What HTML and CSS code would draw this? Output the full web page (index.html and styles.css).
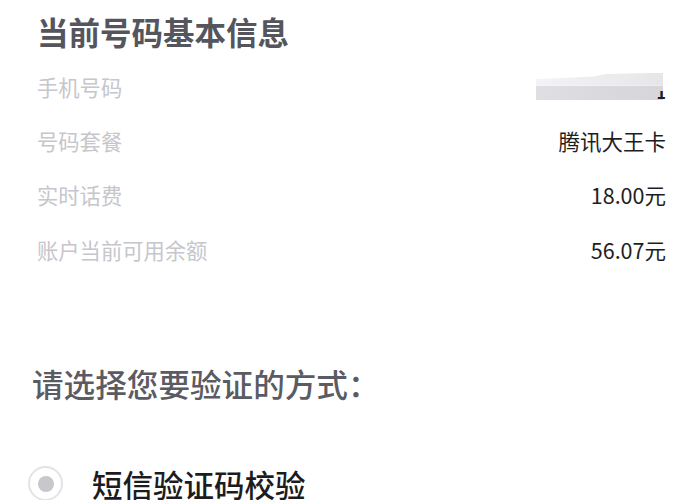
FILE: index.html
```html
<!DOCTYPE html>
<html lang="zh-CN">
<head>
<meta charset="utf-8">
<title>当前号码基本信息</title>
<link rel="stylesheet" href="styles.css">
</head>
<body>
<div class="page">
  <h1 class="title">当前号码基本信息</h1>
  <div class="rows">
    <div class="row">
      <span class="label">手机号码</span>
      <span class="value masked"><span class="blur"><span class="blur-top"></span><span class="blur-bottom"></span></span><span class="tail">1</span></span>
    </div>
    <div class="row">
      <span class="label">号码套餐</span>
      <span class="value">腾讯大王卡</span>
    </div>
    <div class="row">
      <span class="label">实时话费</span>
      <span class="value">18.00元</span>
    </div>
    <div class="row">
      <span class="label">账户当前可用余额</span>
      <span class="value">56.07元</span>
    </div>
  </div>
  <h2 class="subtitle">请选择您要验证的方式：</h2>
  <div class="option">
    <span class="radio"><span class="dot"></span></span>
    <span class="option-text">短信验证码校验</span>
  </div>
</div>
</body>
</html>
```

FILE: styles.css
```css
html, body {
  margin: 0;
  padding: 0;
  background: #ffffff;
}
body {
  font-family: "Noto Sans CJK SC", "Noto Sans", sans-serif;
  overflow: hidden;
}
.page {
  width: 677px;
  height: 500px;
  box-sizing: border-box;
  padding: 11px 11px 0 37px;
  overflow: hidden;
}
.title {
  margin: 0;
  font-size: 31.5px;
  line-height: 40px;
  font-weight: 700;
  color: #55555d;
}
.rows {
  margin-top: 8px;
  display: flex;
  flex-direction: column;
}
.row {
  height: 54.4px;
  display: flex;
  align-items: center;
  justify-content: space-between;
}
.label {
  font-size: 21.3px;
  color: #c6c6cc;
  font-weight: 400;
}
.value {
  font-size: 21.5px;
  color: #1e1e22;
  font-weight: 400;
}
.masked {
  display: flex;
  align-items: flex-end;
  position: relative;
  height: 27px;
}
.blur {
  display: flex;
  flex-direction: column;
  width: 127px;
  height: 27px;
  margin-right: 3px;
}
.blur-top {
  height: 13px;
  background: linear-gradient(90deg, #f3f3f5 0%, #eeeef0 40%, #ececee 60%, #e6e6e9 100%);
  clip-path: polygon(0 50%, 45% 30%, 55% 10%, 100% 0, 100% 100%, 0 100%);
}
.blur-bottom {
  height: 14px;
  background: linear-gradient(90deg, #dfdfe3 0%, #dadade 50%, #d6d6da 100%);
}
.tail {
  position: absolute;
  right: 0;
  bottom: 0;
  font-size: 16px;
  line-height: 16px;
  font-weight: 700;
  color: #1e1e22;
  clip-path: inset(45% 0 0 0);
}
.subtitle {
  margin: 86px 0 0 -5px;
  font-size: 31.6px;
  line-height: 40px;
  font-weight: 500;
  color: #5b5b63;
}
.option {
  margin: 61px 0 0 -9px;
  display: flex;
  align-items: center;
  height: 40px;
}
.radio {
  width: 31px;
  height: 31px;
  border: 2px solid #e3e3e6;
  border-radius: 50%;
  display: flex;
  align-items: center;
  justify-content: center;
  flex-shrink: 0;
}
.dot {
  width: 16px;
  height: 16px;
  border-radius: 50%;
  background: #c7c7cc;
}
.option-text {
  margin-left: 29px;
  font-size: 30.5px;
  line-height: 40px;
  font-weight: 500;
  color: #1c1c1e;
}
```
